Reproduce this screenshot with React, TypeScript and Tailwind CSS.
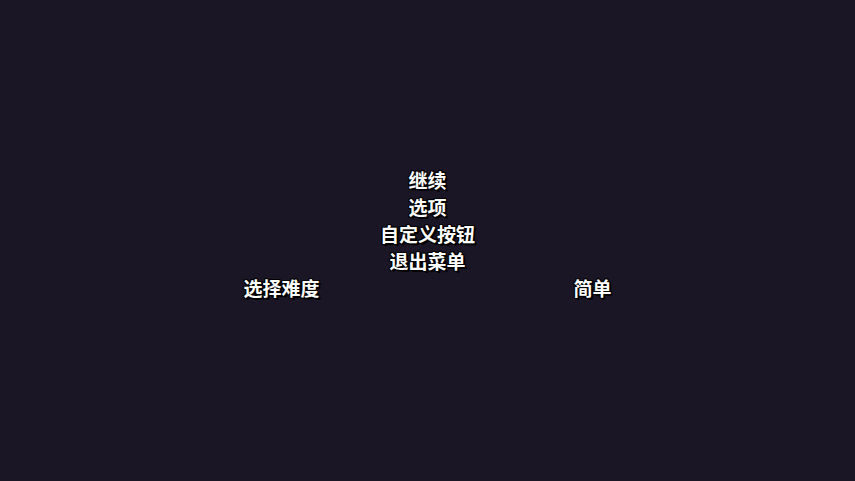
const shadow =
  "[text-shadow:1px_1px_0_#000,-1px_-1px_0_#000,1px_-1px_0_#000,-1px_1px_0_#000,2px_2px_0_#000,1px_0_0_#000,-1px_0_0_#000,0_1px_0_#000,0_-1px_0_#000]";

const items = ["继续", "选项", "自定义按钮", "退出菜单"];

export default function App() {
  return (
    <div className="flex h-[481px] w-[855px] items-center justify-center bg-[#1a1625] pb-[15px] font-['Noto_Sans_CJK_SC',sans-serif] text-[19px] font-semibold text-white">
      <div className="flex flex-col items-center">
        {items.map((label) => (
          <div key={label} className={`h-[27px] leading-[27px] ${shadow}`}>
            {label}
          </div>
        ))}
        {/* difficulty row */}
        <div className="flex h-[27px] w-[368px] items-center justify-between leading-[27px]">
          <span className={shadow}>选择难度</span>
          <span className={shadow}>简单</span>
        </div>
      </div>
    </div>
  );
}
